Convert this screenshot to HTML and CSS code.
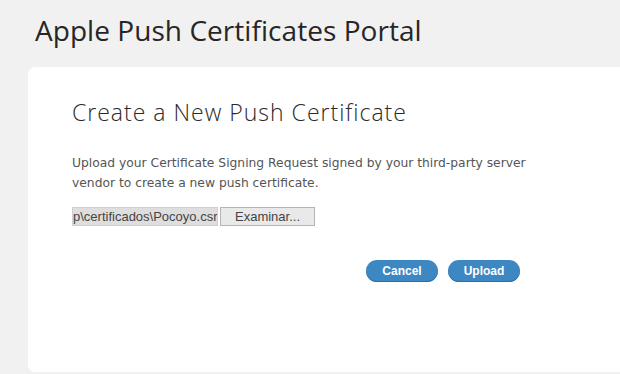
FILE: index.html
```html
<!DOCTYPE html>
<html>
<head>
<meta charset="utf-8">
<link rel="stylesheet" href="styles.css">
</head>
<body>
<header class="top">
  <h1 class="portal-title">Apple Push Certificates Portal</h1>
</header>
<main class="card">
  <h2 class="card-title">Create a New Push Certificate</h2>
  <p class="intro">Upload your Certificate Signing Request signed by your third-party server vendor to create a new push certificate.</p>
  <div class="file-row">
    <span class="file-name">p\certificados\Pocoyo.csr</span>
    <span class="file-btn">Examinar...</span>
  </div>
  <div class="actions">
    <button class="pill">Cancel</button>
    <button class="pill">Upload</button>
  </div>
</main>
</body>
</html>
```
FILE: styles.css
```css
html, body {
  margin: 0;
  padding: 0;
}
body {
  background: #f1f1f1;
  width: 620px;
  height: 374px;
  overflow: hidden;
  font-family: "Open Sans", sans-serif;
}
.top {
  padding: 12px 0 0 35px;
  height: 67px;
  box-sizing: border-box;
}
.portal-title {
  margin: 0;
  font-family: "Open Sans", sans-serif;
  font-weight: 400;
  font-size: 28px;
  letter-spacing: 0.05px;
  color: #262626;
  line-height: 36px;
}
.card {
  margin-left: 28px;
  background: #ffffff;
  border-radius: 7px 0 0 7px;
  height: 305px;
  padding: 30px 0 0 44px;
  box-sizing: border-box;
}
.card-title {
  margin: 0;
  font-family: "Open Sans", sans-serif;
  font-weight: 300;
  font-size: 23px;
  line-height: 30px;
  color: #2a2a2a;
  letter-spacing: 1px;
}
.intro {
  margin: 26px 0 0 0;
  width: 465px;
  font-family: "DejaVu Sans", sans-serif;
  font-size: 12.3px;
  line-height: 20px;
  color: #555555;
}
.file-row {
  display: flex;
  margin-top: 14px;
  height: 19px;
  font-family: "Liberation Sans", Arial, sans-serif;
  font-size: 13px;
  color: #444;
}
.file-name {
  width: 146px;
  background: #dedede;
  border: 1px solid #cfcfcf;
  box-sizing: border-box;
  line-height: 17px;
  overflow: hidden;
  white-space: nowrap;
  text-align: left;
}
.file-btn {
  margin-left: 2px;
  width: 95px;
  background: #e9e9e9;
  border: 1px solid #b4b4b4;
  box-sizing: border-box;
  text-align: center;
  line-height: 17px;
}
.actions {
  display: flex;
  gap: 10px;
  margin: 34px 0 0 294px;
}
.pill {
  width: 72px;
  height: 22px;
  border: none;
  border-radius: 11px;
  background: #3d87c2;
  color: #ffffff;
  font-family: "Liberation Sans", Arial, sans-serif;
  font-weight: 700;
  font-size: 12px;
  padding: 0;
  box-shadow: inset 0 -1px 0 #2b6ea3;
}
```
